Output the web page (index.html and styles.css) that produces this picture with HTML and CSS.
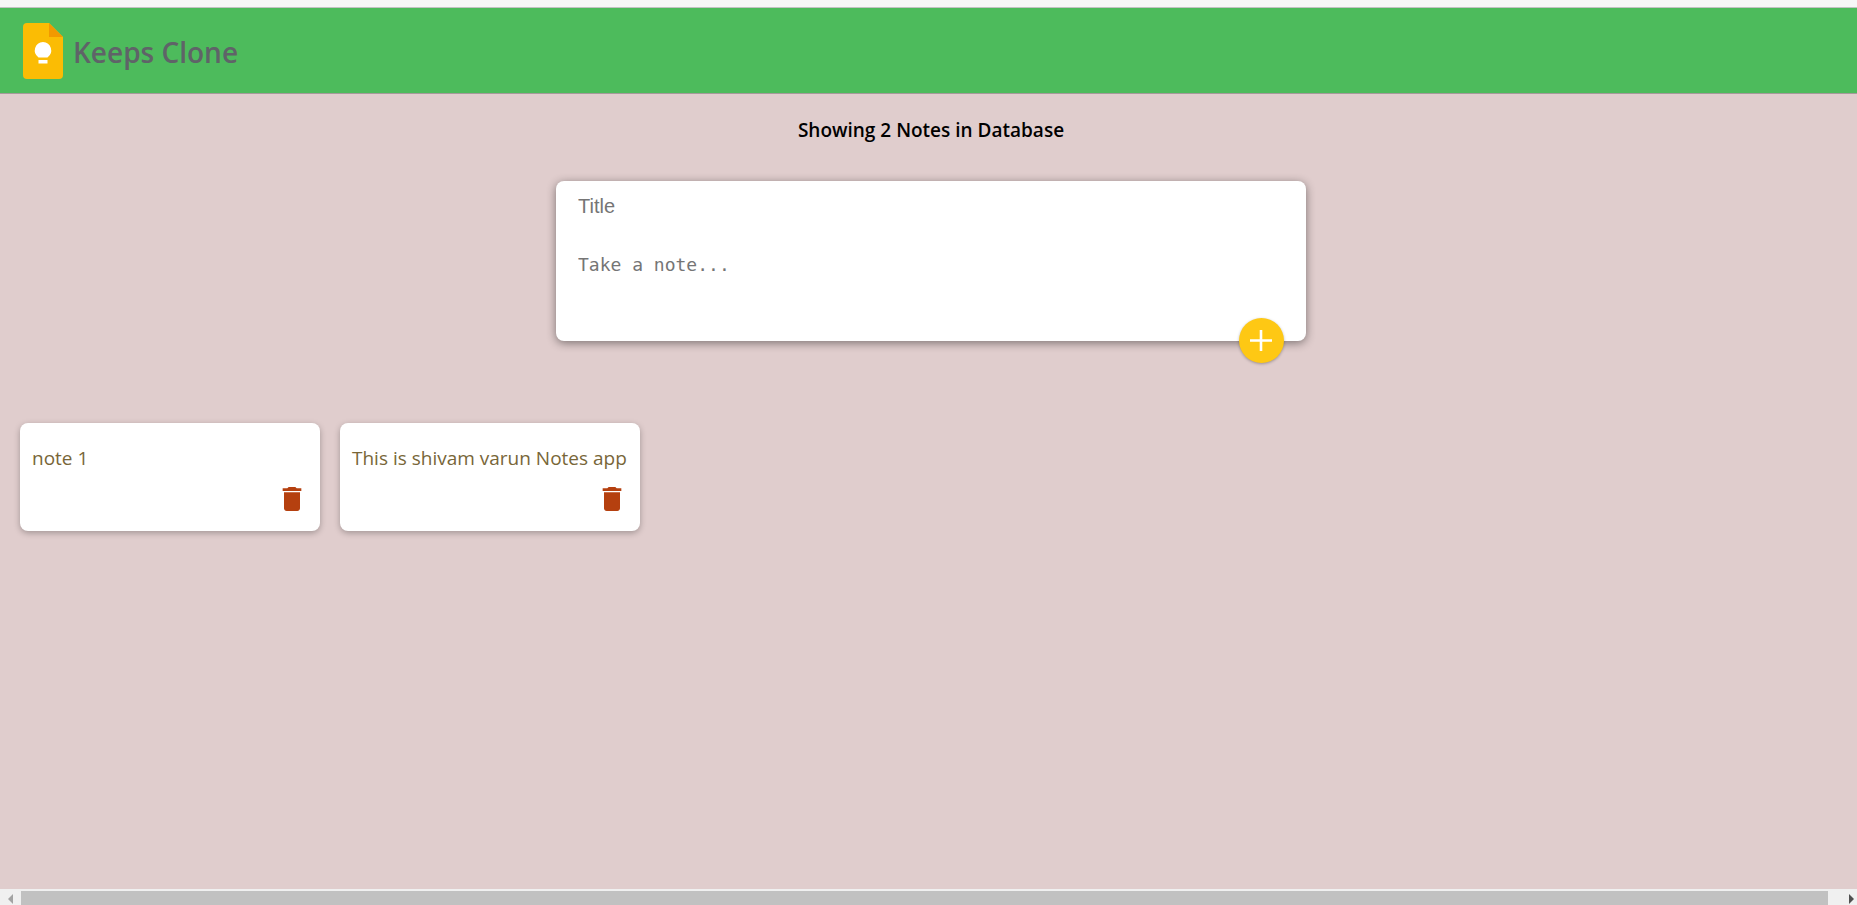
FILE: index.html
```html
<!DOCTYPE html>
<html lang="en">
<head>
<meta charset="utf-8">
<title>Keeps Clone</title>
<link rel="stylesheet" href="styles.css">
</head>
<body>
<header class="header">
  <svg class="logo" viewBox="0 0 40 56" aria-hidden="true">
    <path fill="#fbbc04" d="M4 0h22l14 14v38a4 4 0 0 1-4 4H4a4 4 0 0 1-4-4V4a4 4 0 0 1 4-4z"/>
    <path fill="#f29900" d="M26 0l14 14H26z"/>
    <path fill="#fff" d="M20 19a8.5 8.5 0 0 1 4.500 15.500h-9A8.500 8.500 0 0 1 20 19zM15.500 37h9v3.500h-9z"/>
  </svg>
  <h1 class="brand">Keeps Clone</h1>
</header>
<main class="main">
  <h2 class="count">Showing 2 Notes in Database</h2>
  <form class="composer">
    <input class="composer-title" type="text" placeholder="Title" aria-label="Title">
    <textarea class="composer-text" placeholder="Take a note..." aria-label="Note"></textarea>
    <button class="add" type="button" aria-label="Add note">
      <svg class="add-icon" viewBox="0 0 24 24" aria-hidden="true"><path stroke="#fff" stroke-width="2.600" d="M0 11.500h22M11 1v21"/></svg>
    </button>
  </form>
</main>
<section class="notes" aria-label="Notes">
  <article class="note">
    <p class="note-text">note 1</p>
    <button class="delete" type="button" aria-label="Delete note">
      <svg class="delete-icon" viewBox="0 0 24 24" aria-hidden="true"><path fill="currentColor" d="M6 19c0 1.100.9 2 2 2h8c1.100 0 2-.9 2-2V7H6v12zM19 4h-3.500l-1-1h-5l-1 1H5v2h14V4z"/></svg>
    </button>
  </article>
  <article class="note">
    <p class="note-text">This is shivam varun Notes app</p>
    <button class="delete" type="button" aria-label="Delete note">
      <svg class="delete-icon" viewBox="0 0 24 24" aria-hidden="true"><path fill="currentColor" d="M6 19c0 1.100.9 2 2 2h8c1.100 0 2-.9 2-2V7H6v12zM19 4h-3.500l-1-1h-5l-1 1H5v2h14V4z"/></svg>
    </button>
  </article>
</section>
<div class="scrollbar" aria-hidden="true">
  <svg class="arrow" viewBox="0 0 21 16"><path fill="#a3a3a3" d="M13 5v10L8 10z"/></svg>
  <div class="thumb"></div>
  <svg class="arrow arrow-end" viewBox="0 0 29 16"><path fill="#505050" d="M21 5v10l5-5z"/></svg>
</div>
</body>
</html>
```
FILE: styles.css
```css
* {
  box-sizing: border-box;
}

body {
  display: flex;
  flex-direction: column;
  min-height: 100vh;
  margin: 0;
  background: #e0cdcd;
  font-family: "Segoe UI", "Open Sans", "Noto Sans", sans-serif;
}

.header {
  display: flex;
  align-items: center;
  gap: 10px;
  height: 94px;
  padding: 8px 23px 0;
  border-bottom: 1px solid #a59a9a;
  background: linear-gradient(#f7f7f7 7px, #c3c3c3 7px, #c3c3c3 8px, #4dbb5c 8px);
}

.logo {
  width: 40px;
  height: 56px;
}

.brand {
  margin: 0;
  padding-top: 2px;
  color: #5f6368;
  font-size: 28px;
  font-weight: 600;
  line-height: 40px;
}

.main {
  display: flex;
  flex-direction: column;
  align-items: center;
  gap: 37px;
  padding: 22px 0 0 5px;
}

.count {
  margin: 0;
  color: #000;
  font-family: "Trebuchet MS", "Open Sans", sans-serif;
  font-size: 19px;
  font-weight: 600;
  line-height: 28px;
}

.composer {
  position: relative;
  display: flex;
  flex-direction: column;
  gap: 22px;
  width: 100%;
  max-width: 750px;
  height: 160px;
  padding: 11px 22px;
  border-radius: 8px;
  background: #fff;
  box-shadow: 0 2px 10px rgb(0 0 0 / 45%);
}

.composer-title,
.composer-text {
  width: 100%;
  padding: 0;
  border: 0;
  outline: 0;
  background: none;
  resize: none;
}

.composer-title {
  height: 28px;
  font: 20px "Liberation Sans", Arial, sans-serif;
}

.composer-text {
  height: 72px;
  padding-top: 11px;
  font: 18px/24px "DejaVu Sans Mono", monospace;
}

.composer-title::placeholder,
.composer-text::placeholder {
  color: #757575;
}

.add {
  position: absolute;
  right: 22px;
  bottom: -22px;
  display: grid;
  place-items: center;
  width: 45px;
  height: 45px;
  padding: 0;
  border: 0;
  border-radius: 50%;
  background: #fec814;
  box-shadow: 0 1px 3px rgb(0 0 0 / 30%);
}

.add-icon {
  width: 24px;
  height: 24px;
}

.notes {
  display: flex;
  flex: 1;
  flex-wrap: wrap;
  align-content: flex-start;
  gap: 20px;
  padding: 82px 20px 20px;
}

.note {
  display: flex;
  flex-direction: column;
  align-items: flex-end;
  width: 300px;
  padding: 20px 12px 16px;
  border-radius: 8px;
  background: #fff;
  box-shadow: 0 2px 6px rgb(0 0 0 / 28%);
}

.note-text {
  width: 100%;
  margin: 0;
  padding-bottom: 10px;
  color: #786638;
  font-size: 19px;
  line-height: 30px;
}

.delete {
  display: flex;
  padding: 0;
  border: 0;
  background: none;
  color: #b5400f;
}

.delete-icon {
  width: 32px;
  height: 32px;
}

.scrollbar {
  display: flex;
  height: 16px;
  background: #f0f0f0;
}

.arrow {
  width: 21px;
  height: 16px;
}

.arrow-end {
  width: 29px;
}

.thumb {
  flex: 1;
  margin-top: 2px;
  background: #c1c1c1;
}
```
